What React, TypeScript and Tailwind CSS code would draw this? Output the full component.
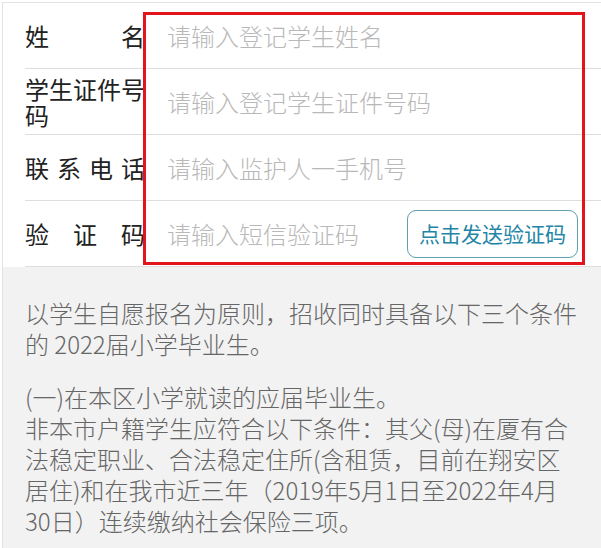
const font = { fontFamily: '"Microsoft YaHei", "Noto Sans CJK SC", "Noto Sans", sans-serif' };

const rows = [
  { label: '姓名', placeholder: '请输入登记学生姓名' },
  { label: '学生证件号码', placeholder: '请输入登记学生证件号码' },
  { label: '联系电话', placeholder: '请输入监护人一手机号' },
  { label: '验证码', placeholder: '请输入短信验证码', sms: true },
];

const notes = [
  ['以学生自愿报名为原则，招收同时具备以下三个条件', '的 2022届小学毕业生。'],
  [
    '(一)在本区小学就读的应届毕业生。',
    '非本市户籍学生应符合以下条件：其父(母)在厦有合',
    '法稳定职业、合法稳定住所(含租赁，目前在翔安区',
    '居住)和在我市近三年（2019年5月1日至2022年4月',
    '30日）连续缴纳社会保险三项。',
  ],
];

export default function App() {
  return (
    <div className="w-[601px] h-[548px] overflow-hidden bg-white pl-[2px] pt-[2px]" style={font}>
      <div className="relative border-l border-t border-[#e3e3e3] h-full">
        <div className="pl-[22px] bg-white">
          {rows.map((r) => (
            <div
              key={r.label}
              className="flex items-center h-[66px] border-b border-[#dedede] pr-[23px]"
            >
              <div className="w-[120px] text-[24px] leading-[26px] text-[#222] text-justify [text-align-last:justify] shrink-0">
                {r.label}
              </div>
              <div className="flex-1 pl-[22px] text-[24px] font-light text-[#b8b8b8] whitespace-nowrap">
                {r.placeholder}
              </div>
              {r.sms && (
                <button className="h-[48px] px-[11px] rounded-[9px] border border-[#5d9fae] text-[#2385a6] text-[21px] bg-white">
                  点击发送验证码
                </button>
              )}
            </div>
          ))}
        </div>

        <div className="bg-[#f2f2f2] h-full pl-[22px] pt-[30px] text-[24px] font-light leading-[31px] text-[#666]">
          {notes.map((p, i) => (
            <div key={i} className="mb-[22px]">
              {p.map((line) => (
                <div key={line} className="whitespace-nowrap">{line}</div>
              ))}
            </div>
          ))}
        </div>

        {/* red annotation box */}
        <div className="absolute left-[140px] top-[9px] w-[442px] h-[253px] border-[3px] border-[#e3141b] pointer-events-none" />
      </div>
    </div>
  );
}
